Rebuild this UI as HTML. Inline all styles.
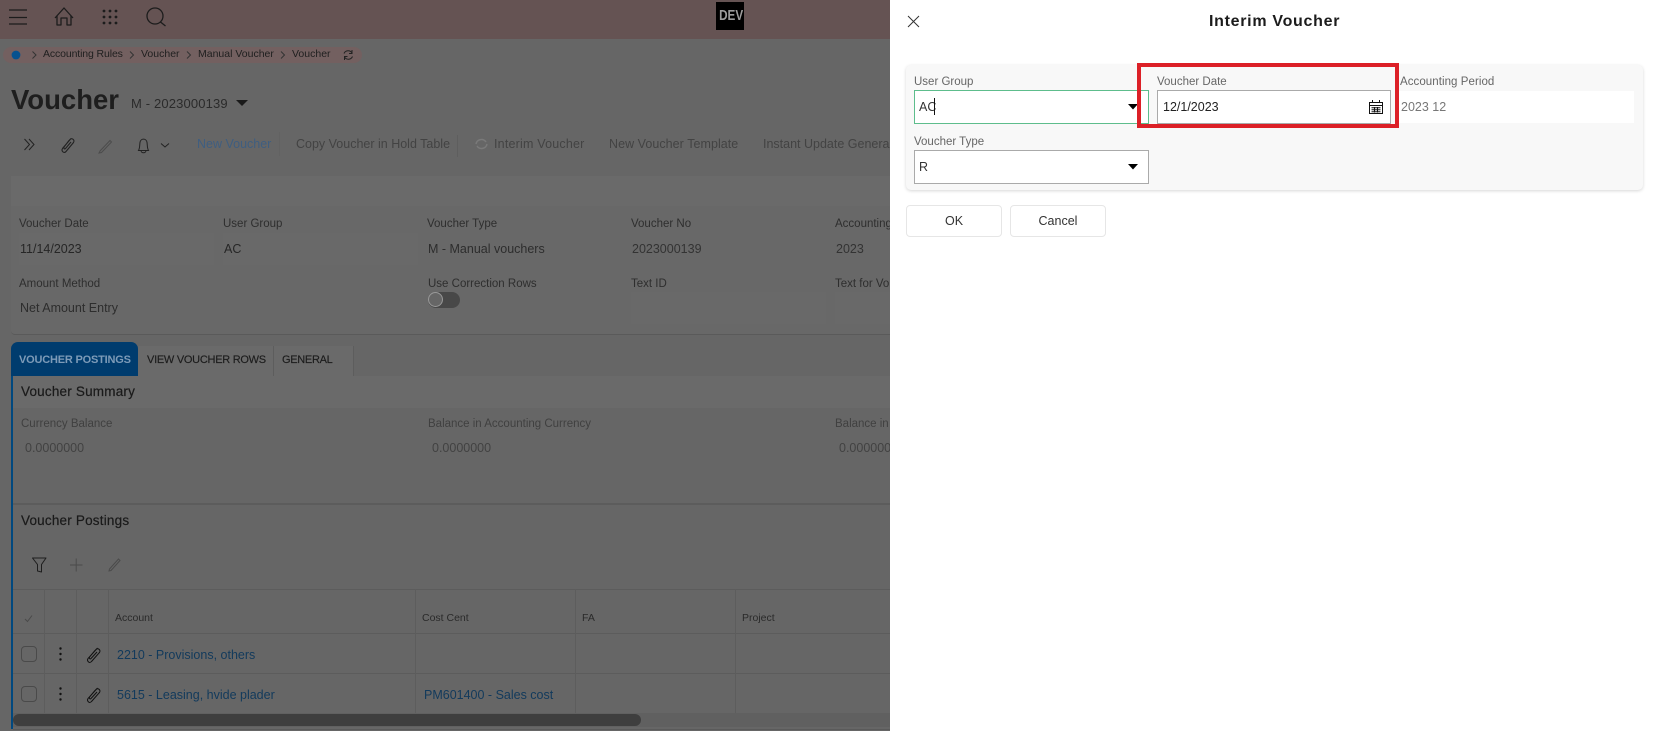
<!DOCTYPE html>
<html><head><meta charset="utf-8"><title>Interim Voucher</title>
<style>
html,body{margin:0;padding:0;width:1655px;height:731px;overflow:hidden;background:#666}
body{position:relative;font-family:"Liberation Sans",sans-serif;font-size:11.5px}
.a,.t{position:absolute}
.t{white-space:nowrap;line-height:16px;height:16px;transform:translateY(-7px)}
.l{color:#2e2e2e;font-size:11.5px}
.v{color:#262626;font-size:12.5px}
.b{color:#434343;font-size:12.5px}
.link{color:#123a5c;font-size:12.5px}
.th{color:#2a2a2a;font-size:10.5px}
.box{position:absolute;background:#696969}
.ln{position:absolute;background:#5d5d5d}
svg{position:absolute;overflow:visible}
.pl{color:#666;font-size:11.5px}
.inp{position:absolute;background:#fff;box-sizing:border-box;border:1px solid #aaa}
.btn{position:absolute;box-sizing:border-box;background:#fff;border:1px solid #e6e6e6;border-radius:4px;text-align:center;line-height:30px;font-size:12.5px;color:#333}
.hd{color:#1a1a1a;font-size:13.5px;letter-spacing:.2px;-webkit-text-stroke:.2px #1a1a1a}
</style></head><body>

<div class="a" style="left:0;top:0;width:890px;height:39px;background:#655353"></div>
<svg style="left:0;top:0" width="200" height="39" fill="none" stroke="#1c1c1c" stroke-width="1.3">
<path d="M9 10H27M9 17.5H27M9 24H27"/>
<path d="M55 18L64 8L73 18M57 16V25H61V18H67V25H71V16" stroke-linejoin="round"/>
<g fill="#1c1c1c" stroke="none"><circle cx="104" cy="11" r="1.4"/><circle cx="110" cy="11" r="1.4"/><circle cx="116" cy="11" r="1.4"/><circle cx="104" cy="17" r="1.4"/><circle cx="110" cy="17" r="1.4"/><circle cx="116" cy="17" r="1.4"/><circle cx="104" cy="23" r="1.4"/><circle cx="110" cy="23" r="1.4"/><circle cx="116" cy="23" r="1.4"/></g>
<circle cx="155" cy="16" r="8"/><path d="M160.5 22L165.5 26"/>
</svg>
<div class="a" style="left:716px;top:2px;width:28px;height:28px;background:#000"><div style="color:#9c9c9c;font-weight:bold;font-size:15px;line-height:28px;text-align:center;transform:scaleX(.78)">DEV</div></div>

<div class="a" style="left:3px;top:47px;width:359px;height:16px;border-radius:8px;background:#736060"></div>
<svg style="left:0;top:40px" width="370" height="30" fill="none" stroke="#333" stroke-width="1">
<circle cx="16" cy="15" r="4.4" fill="#06528f" stroke="none"/>
<path d="M32.5 11.5L36 15L32.5 18.5M130 11.5L133.5 15L130 18.5M187 11.5L190.5 15L187 18.5M281 11.5L284.5 15L281 18.5"/>
<path d="M344 13.5A4.5 4.5 0 0 1 352 13M352.5 16.5A4.5 4.5 0 0 1 344.5 17M352 10V13.5H349M344.5 20V16.5H347.5" stroke="#222"/>
</svg>
<div class="t" style="left:43px;top:53px;color:#1f1f1f;font-size:10.5px;letter-spacing:-.12px">Accounting Rules</div>
<div class="t" style="left:141px;top:53px;color:#1f1f1f;font-size:10.5px">Voucher</div>
<div class="t" style="left:198px;top:53px;color:#1f1f1f;font-size:10.5px">Manual Voucher</div>
<div class="t" style="left:292px;top:53px;color:#1f1f1f;font-size:10.5px">Voucher</div>

<div class="t" style="left:11px;top:100px;font-size:27.5px;font-weight:bold;color:#1e1e1e;line-height:32px;height:32px;transform:translateY(-16px)">Voucher</div>
<div class="t" style="left:131px;top:103px;font-size:13px;letter-spacing:.15px;color:#2b2b2b">M - 2023000139</div>
<svg style="left:236px;top:100px" width="12" height="7"><path d="M0 0H12L6 6Z" fill="#1a1a1a"/></svg>

<svg style="left:0;top:130px" width="190" height="30" fill="none" stroke="#222" stroke-width="1">
<path d="M24.5 9L29.5 14.5L24.5 20M29 9L34 14.5L29 20"/>
<path d="M71 8.5L62.5 18.5C61 21 64 24 66 21.5L73.5 12.5C75 10 72 7.5 70 9.5L63.5 17.5M69 10.5L64 17C63.5 18.5 64.5 19.5 65.5 18.5L71 12" stroke-width="1.1"/>
<path d="M100 21L110 10.5L111.5 12L101.5 22.5L99 23Z" stroke="#4c4c4c"/>
<path d="M138.5 20.5C140 18 139.5 15 140 12.5C140.5 8 146.5 8 147 12.5C147.5 15 147 18 148.5 20.5ZM141 20.5C141 23.5 146 23.5 146 20.5"/>
<path d="M161 13.5L165 17L169 13.5"/>
</svg>
<div class="t b" style="left:197px;top:143px;color:#3f5e80">New Voucher</div>
<div class="ln" style="left:279px;top:132px;width:1px;height:24px;background:#626262"></div>
<div class="t b" style="left:296px;top:143px">Copy Voucher in Hold Table</div>
<div class="ln" style="left:457px;top:135px;width:1px;height:22px;background:#5e5e5e"></div>
<svg style="left:475px;top:138px" width="14" height="12" fill="none" stroke="#7a7a7a" stroke-width="1.5"><path d="M1 6A5.5 5.5 0 0 1 11 4M12 6A5.5 5.5 0 0 1 2 8"/></svg>
<div class="t b" style="left:494px;top:143px;letter-spacing:.2px">Interim Voucher</div>
<div class="t b" style="left:609px;top:143px;letter-spacing:.05px">New Voucher Template</div>
<div class="t b" style="left:763px;top:143px">Instant Update Genera</div>

<div class="a" style="left:11px;top:176px;width:879px;height:158px;background:#686868;border-bottom:1px solid #5a5a5a;border-radius:4px 0 0 4px"></div>
<div class="a" style="left:11px;top:176px;width:879px;height:30px;background:#6a6a6a"></div>

<div class="box" style="left:19px;top:233px;width:195px;height:32px"></div>
<div class="box" style="left:223px;top:233px;width:195px;height:32px"></div>
<div class="box" style="left:631px;top:292px;width:195px;height:32px"></div>
<div class="box" style="left:835px;top:292px;width:55px;height:32px"></div>

<div class="t l" style="left:19px;top:223px">Voucher Date</div>
<div class="t l" style="left:223px;top:223px">User Group</div>
<div class="t l" style="left:427px;top:223px">Voucher Type</div>
<div class="t l" style="left:631px;top:223px">Voucher No</div>
<div class="t l" style="left:835px;top:223px">Accounting</div>
<div class="t v" style="left:20px;top:248px">11/14/2023</div>
<div class="t v" style="left:224px;top:248px">AC</div>
<div class="t v" style="left:428px;top:248px;color:#2d2d2d">M - Manual vouchers</div>
<div class="t v" style="left:632px;top:248px;color:#333">2023000139</div>
<div class="t v" style="left:836px;top:248px;color:#333">2023</div>
<div class="t l" style="left:19px;top:283px">Amount Method</div>
<div class="t l" style="left:428px;top:283px">Use Correction Rows</div>
<div class="t l" style="left:631px;top:283px">Text ID</div>
<div class="t l" style="left:835px;top:283px">Text for Vo</div>
<div class="t v" style="left:20px;top:307px;color:#2d2d2d">Net Amount Entry</div>
<div class="a" style="left:428px;top:292px;width:32px;height:16px;border-radius:8px;background:#484848"></div>
<div class="a" style="left:428px;top:292px;width:15px;height:15px;box-sizing:border-box;border-radius:50%;background:#666;border:1px solid #999"></div>

<div class="a" style="left:11px;top:342px;width:127px;height:34px;background:#003c6e;border-radius:7px 7px 0 0"></div>
<div class="a" style="left:138px;top:346px;width:215px;height:30px;background:#6a6a6a"></div>
<div class="ln" style="left:273px;top:346px;width:1px;height:30px"></div>
<div class="ln" style="left:353px;top:346px;width:1px;height:30px"></div>
<div class="t" style="left:19px;top:359px;color:#7d9bb8;font-size:11px;letter-spacing:-.2px;font-weight:bold">VOUCHER POSTINGS</div>
<div class="t" style="left:147px;top:359px;color:#1c1c1c;font-size:11px;letter-spacing:-.27px;-webkit-text-stroke:.15px #1c1c1c">VIEW VOUCHER ROWS</div>
<div class="t" style="left:282px;top:359px;color:#1c1c1c;font-size:11px;letter-spacing:-.3px;-webkit-text-stroke:.15px #1c1c1c">GENERAL</div>

<div class="a" style="left:11px;top:376px;width:2px;height:353px;background:#00487f"></div>
<div class="a" style="left:13px;top:376px;width:877px;height:32px;background:#6a6a6a"></div>
<div class="t hd" style="left:21px;top:391px">Voucher Summary</div>
<div class="t l" style="left:21px;top:423px;color:#404040">Currency Balance</div>
<div class="t v" style="left:25px;top:447px;color:#424242">0.0000000</div>
<div class="t l" style="left:428px;top:423px;color:#404040">Balance in Accounting Currency</div>
<div class="t v" style="left:432px;top:447px;color:#424242">0.0000000</div>
<div class="t l" style="left:835px;top:423px;color:#404040">Balance in</div>
<div class="t v" style="left:839px;top:447px;color:#424242">0.000000</div>
<div class="a" style="left:13px;top:503px;width:877px;height:2px;background:#5c5c5c"></div>
<div class="t hd" style="left:21px;top:520px">Voucher Postings</div>

<svg style="left:0;top:550px" width="130" height="30" fill="none" stroke="#1e1e1e" stroke-width="1">
<path d="M32.5 8H46L41.5 14.5V22L37.5 21V14.5Z" stroke-linejoin="round"/>
<path d="M70 15H82.5M76.2 8.5V21.5" stroke="#4b4b4b"/>
<path d="M109.5 19L118.5 9L120 10.5L111 20.5L109 21Z" stroke="#4b4b4b"/>
</svg>

<div class="a" style="left:13px;top:589px;width:877px;height:1px;background:#5c5c5c"></div>
<div class="a" style="left:13px;top:633px;width:877px;height:1px;background:#5c5c5c"></div>
<div class="a" style="left:13px;top:673px;width:877px;height:1px;background:#5c5c5c"></div>
<div class="ln" style="left:44px;top:589px;width:1px;height:124px"></div>
<div class="ln" style="left:76px;top:589px;width:1px;height:124px"></div>
<div class="ln" style="left:108px;top:589px;width:1px;height:124px"></div>
<div class="ln" style="left:415px;top:589px;width:1px;height:124px"></div>
<div class="ln" style="left:575px;top:589px;width:1px;height:124px"></div>
<div class="ln" style="left:735px;top:589px;width:1px;height:124px"></div>
<svg style="left:24px;top:614px" width="10" height="9" fill="none" stroke="#4a4a4a"><path d="M1 5L3.5 7.5L8 1.5"/></svg>
<div class="t th" style="left:115px;top:617px">Account</div>
<div class="t th" style="left:422px;top:617px">Cost Cent</div>
<div class="t th" style="left:582px;top:617px">FA</div>
<div class="t th" style="left:742px;top:617px">Project</div>

<div class="a" style="left:21px;top:646px;width:16px;height:16px;box-sizing:border-box;border:1px solid #4a4a4a;border-radius:4px"></div>
<div class="a" style="left:21px;top:686px;width:16px;height:16px;box-sizing:border-box;border:1px solid #4a4a4a;border-radius:4px"></div>
<svg style="left:56px;top:645px" width="8" height="60" fill="#111"><circle cx="4.5" cy="3.5" r="1.2"/><circle cx="4.5" cy="9" r="1.2"/><circle cx="4.5" cy="14.5" r="1.2"/><circle cx="4.5" cy="43.5" r="1.2"/><circle cx="4.5" cy="49" r="1.2"/><circle cx="4.5" cy="54.5" r="1.2"/></svg>
<svg style="left:78px;top:640px" width="30" height="70" fill="none" stroke="#111" stroke-width="1">
<path d="M19.5 8L10 18.5C8.500 21 11.500 24 13.500 21.500L21.500 12.500C23 10 20 7.500 18 9.500L11 17.500M17 10.500L11.500 17C11 18.500 12 19.500 13 18.500L19 12"/>
<path d="M19.5 48L10 58.500C8.500 61 11.500 64 13.500 61.500L21.500 52.500C23 50 20 47.500 18 49.500L11 57.500M17 50.500L11.500 57C11 58.500 12 59.500 13 58.500L19 52"/>
</svg>
<div class="t link" style="left:117px;top:654px">2210 - Provisions, others</div>
<div class="t link" style="left:117px;top:694px">5615 - Leasing, hvide plader</div>
<div class="t link" style="left:424px;top:694px">PM601400 - Sales cost</div>

<div class="a" style="left:13px;top:713px;width:877px;height:14px;background:#606060"></div>
<div class="a" style="left:13px;top:714px;width:628px;height:12px;background:#3e3e3e;border-radius:6px"></div>
<div class="a" style="left:13px;top:729px;width:877px;height:1px;background:#5a5a5a"></div>

<!-- Panel -->
<div class="a" style="left:890px;top:0;width:765px;height:731px;background:#fff"></div>
<svg style="left:907px;top:15px" width="13" height="13" fill="none" stroke="#333" stroke-width="1"><path d="M1 1L12 12M12 1L1 12"/></svg>
<div class="t" style="left:1209px;top:21px;font-size:16px;letter-spacing:.7px;font-weight:bold;color:#1c1c1c;line-height:18px;height:18px;transform:translateY(-8px)">Interim Voucher</div>

<div class="a" style="left:906px;top:65px;width:737px;height:125px;background:#f8f8f8;border-radius:5px;box-shadow:0 1px 3px rgba(0,0,0,.16)"></div>
<div class="t pl" style="left:914px;top:81px">User Group</div>
<div class="inp" style="left:914px;top:90px;width:235px;height:34px;border-color:#5dbd8c"></div>
<div class="t v" style="left:919px;top:106px;color:#333">AC</div>
<div class="a" style="left:934px;top:98px;width:1px;height:17px;background:#111"></div>
<svg style="left:1128px;top:104px" width="11" height="6"><path d="M0 0H10L5 5.5Z" fill="#000"/></svg>

<div class="t pl" style="left:1157px;top:81px">Voucher Date</div>
<div class="inp" style="left:1157px;top:90px;width:234px;height:34px"></div>
<div class="t v" style="left:1163px;top:106px;color:#222">12/1/2023</div>
<svg style="left:1369px;top:100px" width="14" height="14" fill="none" stroke="#111" stroke-width="1">
<path d="M.5 2.5H13.5V13.5H.5ZM.5 5.5H13.5M3.5 0V3M10.5 0V3M2.5 7.8H11.5M2.5 9.8H11.5M2.5 11.8H11.5M5.5 7V12.5M8.5 7V12.5"/>
</svg>

<div class="t pl" style="left:1400px;top:81px;letter-spacing:.06px">Accounting Period</div>
<div class="a" style="left:1399px;top:91px;width:235px;height:32px;background:#fff"></div>
<div class="t v" style="left:1401px;top:106px;color:#777">2023 12</div>

<div class="t pl" style="left:914px;top:141px">Voucher Type</div>
<div class="inp" style="left:914px;top:150px;width:235px;height:34px"></div>
<div class="t v" style="left:919px;top:166px;color:#333">R</div>
<svg style="left:1128px;top:164px" width="11" height="6"><path d="M0 0H10L5 5.5Z" fill="#000"/></svg>

<div class="a" style="left:1137px;top:63px;width:262px;height:65px;box-sizing:border-box;border:4px solid #dc2027"></div>

<div class="btn" style="left:906px;top:205px;width:96px;height:32px">OK</div>
<div class="btn" style="left:1010px;top:205px;width:96px;height:32px">Cancel</div>
</body></html>
